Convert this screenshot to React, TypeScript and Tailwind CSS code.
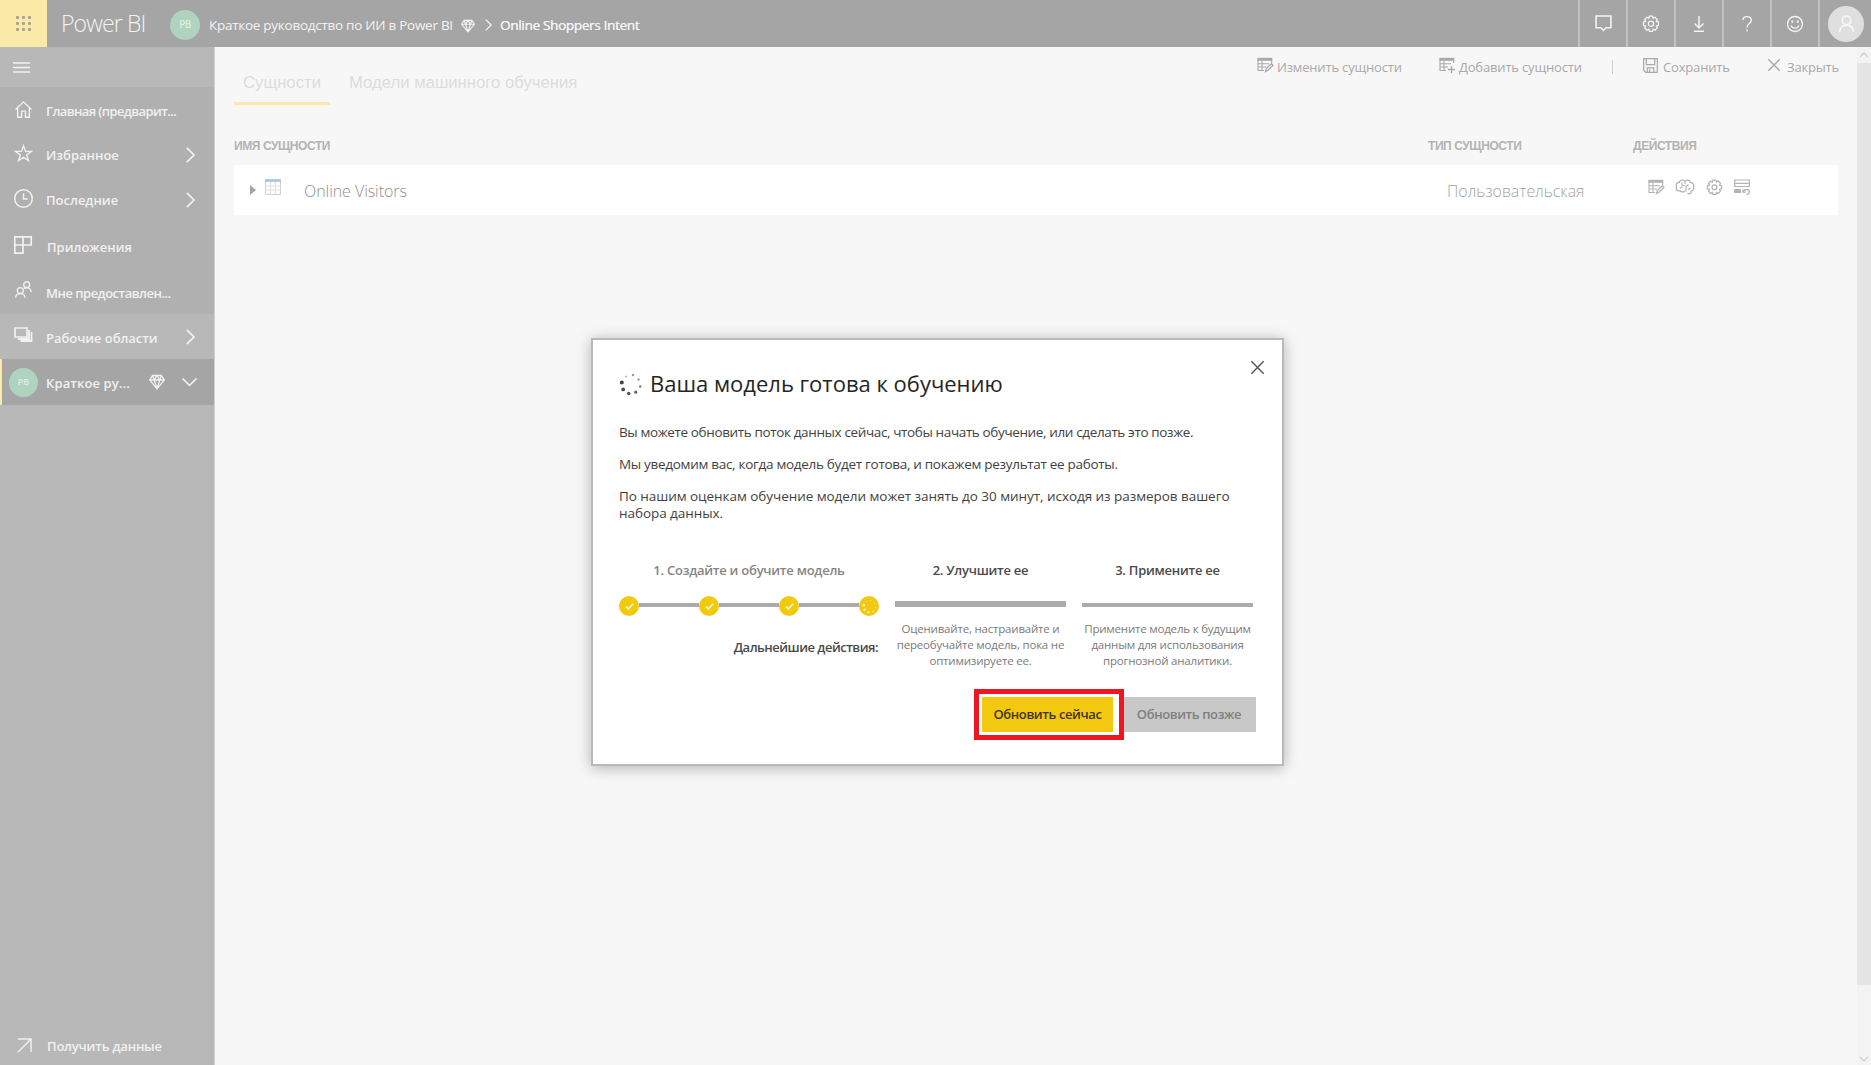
import React from 'react';

type P = { children?: React.ReactNode; className?: string; vb?: string };
const Svg = ({ children, className = '', vb = '0 0 16 16' }: P) => (
  <svg viewBox={vb} className={'shrink-0 overflow-visible ' + className} fill="none" stroke="currentColor" strokeWidth="1.3">
    {children}
  </svg>
);

const Diamond = ({ className = '' }: P) => (
  <Svg className={className}>
    <path d="M3.6 1.5h8.8L15.3 6 8 14.8.7 6zM.7 6h14.6M5.2 6 8 14.5 10.8 6 8 1.5zM3.6 1.5 5.2 6M12.4 1.5 10.8 6" />
  </Svg>
);
const Gear = ({ className = '' }: P) => (
  <Svg className={className}>
    <path d="M6.6 1h2.8l.5 1.9 1.7-.9 2 2-.9 1.7 1.9.6v2.9l-1.9.6.9 1.7-2 2-1.7-.9-.5 1.900H6.600l-.5-1.900-1.700.9-2-2 .9-1.700L1.400 9.200V6.300l1.900-.6L2.400 4l2-2 1.700.9z" strokeWidth="1.200" />
    <circle cx="8" cy="7.800" r="2.300" strokeWidth="1.200" />
  </Svg>
);
const TableEdit = ({ className = '', plus }: P & { plus?: boolean }) => (
  <Svg className={className}>
    <path d="M.3 2.300h15" strokeWidth="3" />
    <path d="M1 3v10.500h6M14.700 3v3M1 6.800h11M1 10h8M5 4v9.500" strokeWidth="1.100" />
    {plus ? <path d="M12.500 9v7M9 12.500h7" /> : <path d="m8.500 14.500.8-3 5-4.800 1.700 1.600-5 5z" />}
  </Svg>
);
const Chevron = ({ className = '' }: P) => (
  <Svg className={className} vb="0 0 9 16">
    <path d="m.8.8 7.200 7.200-7.200 7.200" strokeWidth="1.700" />
  </Svg>
);
const Cross = ({ className = '' }: P) => (
  <Svg className={className} vb="0 0 12 12">
    <path d="m.3.3 11.400 11.400M11.700.3.3 11.700" />
  </Svg>
);

const dots = [
  [9.3, 2, 1.2], [5, 7.3, 1.5], [-1.7, 8.7, 1.7], [-7, 4.7, 1.8], [-8.3, -2, 1.9], [-4.3, -7.7, 0.8], [2.3, -9, 1.1], [7.7, -4.7, 1.1],
];
const Spinner = ({ className = '' }: P) => (
  <svg viewBox="-11 -11 22 22" className={'shrink-0 ' + className} fill="currentColor">
    {dots.map(([x, y, r], i) => (
      <circle key={i} cx={x} cy={y} r={r} opacity={0.1 + r / 2.4} />
    ))}
  </svg>
);

const HeaderCell = ({ children }: P) => (
  <div className="flex h-full w-12 items-center justify-center border-l-2 border-[#c2c2c2] text-[#f4f4f4]">{children}</div>
);

const NavRow = ({ icon, label, labelClass = '', className = '', chevron }: { icon: React.ReactNode; label: string; labelClass?: string; className?: string; chevron?: boolean }) => (
  <div className={'flex items-center pl-[14px] pr-[19px] ' + className}>
    <span className="flex w-8 shrink-0 -translate-y-[2px] items-center">{icon}</span>
    <span className={'flex-1 whitespace-nowrap pt-[2px] text-[13px] font-semibold ' + labelClass}>{label}</span>
    {chevron && <Chevron className="h-4 w-[9px]" />}
  </div>
);

const Check = () => (
  <span className="flex size-5 items-center justify-center rounded-full bg-[#f2c811] text-[#fff7cc]">
    <svg viewBox="0 0 10 8" className="h-[7px] w-[9px]" fill="none" stroke="currentColor" strokeWidth="2">
      <path d="m.8 3.800 2.800 2.800L9.200 1" />
    </svg>
  </span>
);

export default function App() {
  return (
    <div className="flex h-[1065px] w-[1871px] flex-col overflow-hidden bg-[#f7f7f7] font-['Open_Sans','Noto_Sans',sans-serif]">
      <header className="flex h-[47px] shrink-0 items-center bg-[#a5a5a5] text-[#f3f3f3]">
        <div className="grid h-[47px] w-[47px] shrink-0 place-items-center bg-[#faeaa7]">
          <div className="grid grid-cols-3 gap-[3px]">
            {Array.from({ length: 9 }, (_, i) => (
              <span key={i} className="size-[3px] rounded-[1px] bg-[#a9a58f]" />
            ))}
          </div>
        </div>
        <span className="ml-[14px] w-[109px] whitespace-nowrap text-[23px] font-light tracking-[-0.85px]">Power BI</span>
        <span className="mt-[2px] grid size-[30px] place-items-center rounded-full bg-[#afd3bf] text-[10px] font-semibold tracking-[-0.5px] text-[#dceee2]">PB</span>
        <span className="ml-[9px] mt-[3px] w-[252px] whitespace-nowrap text-[13.500px] tracking-[-0.27px]">Краткое руководство по ИИ в Power BI</span>
        <Diamond className="mt-[4px] size-[14px]" />
        <Chevron className="ml-[10px] mt-[3px] h-3 w-[7px]" />
        <span className="ml-2 mt-[4px] whitespace-nowrap text-[13.500px] tracking-[-0.3px] [text-shadow:0.3px_0_0_currentColor]">Online Shoppers Intent</span>
        <div className="ml-auto flex h-full">
          <HeaderCell>
            <Svg className="size-[17px]"><path d="M1 1h14v11H10.500L8 14.500 5.500 12H1z" strokeWidth="1.500" /></Svg>
          </HeaderCell>
          <HeaderCell><Gear className="size-[18px]" /></HeaderCell>
          <HeaderCell>
            <Svg className="size-4"><path d="M8 0v12M3.500 7.500 8 12l4.500-4.500M3 15.300h10" strokeWidth="1.500" /></Svg>
          </HeaderCell>
          <HeaderCell>
            <Svg className="size-4"><path d="M3.800 4C4 1.500 5.500.6 8 .6s4.300 1.300 4.300 3.600C12.300 7.500 8 7.500 8 11.500M8 13.500v2" strokeWidth="1.400" /></Svg>
          </HeaderCell>
          <HeaderCell>
            <Svg className="size-4"><circle cx="8" cy="8" r="7.500" strokeWidth="1.400" /><path d="M4 9.500c1.500 3.500 6.500 3.500 8 0" strokeWidth="1.400" /><path d="M5.300 4.500v2.300M10.700 4.500v2.300" strokeWidth="1.900" /></Svg>
          </HeaderCell>
          <div className="flex h-full w-[53px] items-center border-l-2 border-[#c2c2c2] pl-2">
            <span className="grid size-9 place-items-center rounded-full bg-[#dfdfdf] text-[#f8f8f8]">
              <Svg className="size-[17px]"><circle cx="8" cy="5" r="4" strokeWidth="1.500" /><path d="M1.500 16c.3-9 12.700-9 13 0" strokeWidth="1.500" /></Svg>
            </span>
          </div>
        </div>
      </header>

      <div className="flex min-h-0 flex-1">
        <nav className="flex w-[215px] shrink-0 flex-col border-r border-[#d0d0d0] bg-[#b8b8b8] text-[#f1f1f1]">
          <div className="flex h-10 items-center pl-[13px]">
            <Svg className="h-[11px] w-[17px]" vb="0 0 17 11"><path d="M0 1h17M0 5.500h17M0 10h17" /></Svg>
          </div>
          <div className="bg-[#b0b0b0]">
            <NavRow className="h-12" label="Главная (предварит..." labelClass="tracking-[-0.6px]"
              icon={<Svg className="ml-[1px] size-[17px]"><path d="M.5 8 8 .8 15.500 8M2.500 6.500v8.800h3.700V9.500h3.600v5.800h3.700V6.500" /></Svg>} />
            <NavRow className="h-10" chevron label="Избранное"
              icon={<Svg className="ml-[1px] size-[17px]"><path d="m8 .8 1.900 5.200h5.500l-4.400 3.400 1.600 5.300L8 11.500l-4.600 3.200L5 9.400.6 6h5.500z" /></Svg>} />
            <NavRow className="h-[50px]" chevron label="Последние"
              icon={<Svg className="size-[19px]"><circle cx="8" cy="8" r="7.400" /><path d="M8 3.500v5h3.500" /></Svg>} />
            <NavRow className="h-[44px]" label="Приложения" labelClass="ml-[1px]"
              icon={<Svg className="size-[18px]"><path d="M.7.700h14.600v7.300H.7zM.7 8v7.300H8V.700" strokeWidth="1.500" /></Svg>} />
            <NavRow className="h-[45px]" label="Мне предоставлен..." labelClass="tracking-[-0.5px] translate-y-[1px]"
              icon={<Svg className="ml-[1px] size-[17px]"><circle cx="11" cy="3.500" r="2.800" /><circle cx="5" cy="9" r="2.800" /><path d="M.6 15.800c.2-5.200 8.600-5.200 8.800 0M8.500 7c3-2 6.500-.2 6.800 3.300" /></Svg>} />
          </div>
          <NavRow className="h-[45px]" chevron label="Рабочие области" labelClass="tracking-[-0.06px] translate-y-[1px]"
            icon={<Svg className="h-[15px] w-[19px]" vb="0 0 19 15"><path d="M1 1h12v9H1z" strokeWidth="1.700" /><path d="M15 3v9H4M17.500 5v9H6.500" strokeWidth="1.800" /></Svg>} />
          <div className="flex h-[46px] items-center border-l-2 border-[#faeaa7] bg-[#a5a5a5] pl-[7px]">
            <span className="grid size-[29px] place-items-center rounded-full bg-[#afd3bf] text-[9px] font-semibold text-[#dceee2]">PB</span>
            <span className="ml-2 w-[103px] pt-[3px] text-[13px] font-semibold tracking-[0.1px]">Краткое ру...</span>
            <Diamond className="size-4" />
            <Svg className="ml-[17px] h-2 w-[15px]" vb="0 0 15 8"><path d="m.5.500 7 6.800 7-6.800" strokeWidth="1.600" /></Svg>
          </div>
          <div className="mt-auto flex h-[39px] items-center pl-[17px]">
            <Svg className="size-[15px]"><path d="M1 1h14v14M15 1 .8 15.200" strokeWidth="1.500" /></Svg>
            <span className="ml-[15px] pt-[2px] text-[13px] font-semibold tracking-[-0.2px]">Получить данные</span>
          </div>
        </nav>

        <main className="flex flex-1 flex-col pl-[19px] pr-[19px]">
          <div className="flex h-[58px] justify-between">
            <div className="flex h-[58px] font-['Liberation_Sans',sans-serif] text-[16.700px] text-[#dcdcdc]">
              <span className="h-full w-24 border-b-[3px] border-[#faeaa7] pt-[23px] text-center">Сущности</span>
              <span className="ml-[19px] pt-[23px]">Модели машинного обучения</span>
            </div>
            <div className="flex h-10 items-center whitespace-nowrap text-[13px] tracking-[-0.17px] text-[#a9a9a9]">
              <TableEdit className="-mt-1 size-4" />
              <span className="ml-1 w-[162px] pt-[2px]">Изменить сущности</span>
              <TableEdit plus className="-mt-1 size-4" />
              <span className="ml-1 w-[153px] pt-[2px]">Добавить сущности</span>
              <span className="h-[14px] w-px bg-[#cfcfcf]" />
              <Svg className="-mt-1 ml-[30px] size-[15px]"><path d="M.7.700h14.600v14.600H3L.7 13zM3.500 1v6h9V1M4.500 15v-4.500h7V15M7 12v3" /></Svg>
              <span className="ml-[5px] w-[105px] pt-[2px]">Сохранить</span>
              <Cross className="-mt-1 size-3" />
              <span className="ml-[7px] w-[51px] pt-[2px]">Закрыть</span>
            </div>
          </div>
          <div className="flex h-[60px] items-center pt-[21px] font-['Liberation_Sans',sans-serif] text-[12px] font-bold tracking-[-0.42px] text-[#b3b3b3]">
            <span className="w-[1194px]">ИМЯ СУЩНОСТИ</span>
            <span className="w-[205px]">ТИП СУЩНОСТИ</span>
            <span>ДЕЙСТВИЯ</span>
          </div>
          <div className="flex h-[50px] w-[1604px] items-center bg-white pl-4 text-[#b3b3b3]">
            <svg viewBox="0 0 6 10" className="h-[10px] w-[6px]" fill="#a5a5a5"><path d="M0 0l6 5-6 5z" /></svg>
            <svg viewBox="0 0 16 16" className="ml-[9px] mr-[23px] size-4 -translate-y-[3px]" fill="none" stroke="#cfcfcf">
              <path d="M.5.500h15v15H.5z" /><path d="M5.500 2v13.500M10.500 2v13.500M.5 7h15M.5 11h15" stroke="#dedede" />
              <path d="M0 1.500h16" stroke="#b3c8e4" strokeWidth="3" />
            </svg>
            <span className="w-[1143px] pt-[1px] text-[16px] font-light tracking-[-0.05px] text-[#8e8e8e]">Online Visitors</span>
            <span className="w-[201px] pt-[4px] text-[15.900px] font-light text-[#a2a2a2]">Пользовательская</span>
            <div className="flex -translate-y-[3px] items-center">
              <TableEdit className="size-4" />
              <Svg className="ml-[11px] h-4 w-5" vb="0 0 20 16">
                <path d="M10 2.500C8 0 4.500.8 4.500 3.300 2 3 .2 5.500 1.600 8c-1.300 2.500 1 4.500 3.400 3.600 1 1.800 4 1.800 5 .2" />
                <path d="M10 2.500c1.500-2.300 5-1.500 5.300.8 2.700.2 4.200 2.700 3.200 5 .8 2-.5 3.800-2.300 3.800.3 2.500-2 3.500-3.700 2" />
                <path d="M7 3.500v3h3M5 9l2.500-1M13.500 5.500 11 7.500v5M15.500 9l-2.500 1.500M10 2.500v2.500" strokeWidth="1.100" />
              </Svg>
              <Gear className="ml-[11px] size-[17px]" />
              <Svg className="ml-[11px] size-4"><path d="M.7 1h14.600v6.500H.7zM.7 4.300h14.600" strokeWidth="1.200" /><path d="M0 12h7" strokeWidth="4" /><path d="M9.500 12.500c1-3 6-2.500 6 .5 0 1.500-1.500 2.500-3 2.300M9 10.500v2.700h2.700" /></Svg>
            </div>
          </div>
        </main>

        <div className="flex w-[14px] shrink-0 flex-col bg-[#f3f3f3] text-[#cfcfcf]">
          <span className="grid h-4 place-items-center"><Svg className="h-1 w-2" vb="0 0 8 4"><path d="m0 4 4-4 4 4" /></Svg></span>
          <span className="h-[922px] bg-[#e5e5e5]" />
          <span className="mt-auto grid h-[13px] place-items-center"><Svg className="h-1 w-2" vb="0 0 8 4"><path d="m0 0 4 4 4-4" /></Svg></span>
        </div>
      </div>

      <section className="absolute left-[591px] top-[338px] flex h-[428px] w-[693px] flex-col border-2 border-[#b9b9b9] bg-white pl-[26px] pr-[26px] text-[#3f3f3f] shadow-[0_2px_14px_rgba(0,0,0,0.28)]">
        <div className="flex h-[84px] pt-[28px]">
          <Spinner className="mt-[5px] size-[23px] text-[#2b2b2b]" />
          <h1 className="-mt-[2px] ml-[8px] whitespace-nowrap text-[22px] leading-[34px] text-[#252525]">Ваша модель готова к обучению</h1>
          <Cross className="-mt-[7px] ml-auto mr-[-8px] size-[13px] text-[#555]" />
        </div>
        <div className="whitespace-nowrap text-[13.500px] leading-[17px]">
          <p className="mb-[15px] tracking-[-0.37px]">Вы можете обновить поток данных сейчас, чтобы начать обучение, или сделать это позже.</p>
          <p className="mb-[15px] tracking-[-0.3px]">Мы уведомим вас, когда модель будет готова, и покажем результат ее работы.</p>
          <p className="tracking-[-0.05px]">По нашим оценкам обучение модели может занять до 30 минут, исходя из размеров вашего<br />набора данных.</p>
        </div>
        <div className="mt-[38px] flex text-center">
          <div className="w-[260px]">
            <h2 className="text-[13px] font-semibold leading-5 tracking-[-0.25px] text-[#858585]">1. Создайте и обучите модель</h2>
            <div className="mt-4 flex items-center">
              <Check /><i className="h-1 flex-1 -translate-y-[1px] bg-[#ababab]" />
              <Check /><i className="h-1 flex-1 -translate-y-[1px] bg-[#ababab]" />
              <Check /><i className="h-1 flex-1 -translate-y-[1px] bg-[#ababab]" />
              <span className="grid size-5 place-items-center rounded-full bg-[#f2c811] text-[#fff7cc]"><Spinner className="size-[15px]" /></span>
            </div>
            <p className="mt-[21px] pr-[1px] text-right text-[13px] font-semibold leading-5 tracking-[-0.5px] text-[#4a4a4a]">Дальнейшие действия:</p>
          </div>
          <div className="ml-[16px] w-[171px]">
            <h2 className="text-[13px] font-semibold leading-5 tracking-[-0.25px] text-[#4a4a4a]">2. Улучшите ее</h2>
            <i className="mt-[21px] block h-[6px] bg-[#ababab]" />
            <p className="mt-[14px] whitespace-nowrap text-[11.500px] leading-4 tracking-[-0.2px] text-[#7a7a7a]">Оценивайте, настраивайте и<br />переобучайте модель, пока не<br />оптимизируете ее.</p>
          </div>
          <div className="ml-[16px] w-[171px]">
            <h2 className="text-[13px] font-semibold leading-5 tracking-[-0.25px] text-[#4a4a4a]">3. Примените ее</h2>
            <i className="mt-[23px] block h-1 bg-[#ababab]" />
            <p className="mt-[14px] whitespace-nowrap text-[11.500px] leading-4 tracking-[-0.2px] text-[#7a7a7a]">Примените модель к будущим<br />данным для использования<br />прогнозной аналитики.</p>
          </div>
        </div>
        <div className="mt-[20px] flex items-start justify-end whitespace-nowrap text-[13px] font-semibold tracking-[-0.4px]">
          <div className="h-[51px] w-[150px] border-[5px] border-[#ee1620] p-[3px]">
            <button className="block h-[35px] w-[131px] bg-[#f2c811] text-[#3f3510]">Обновить сейчас</button>
          </div>
          <button className="mt-2 h-[35px] w-[132px] bg-[#c8c8c8] pr-[2px] text-[#808080]">Обновить позже</button>
        </div>
      </section>
    </div>
  );
}
